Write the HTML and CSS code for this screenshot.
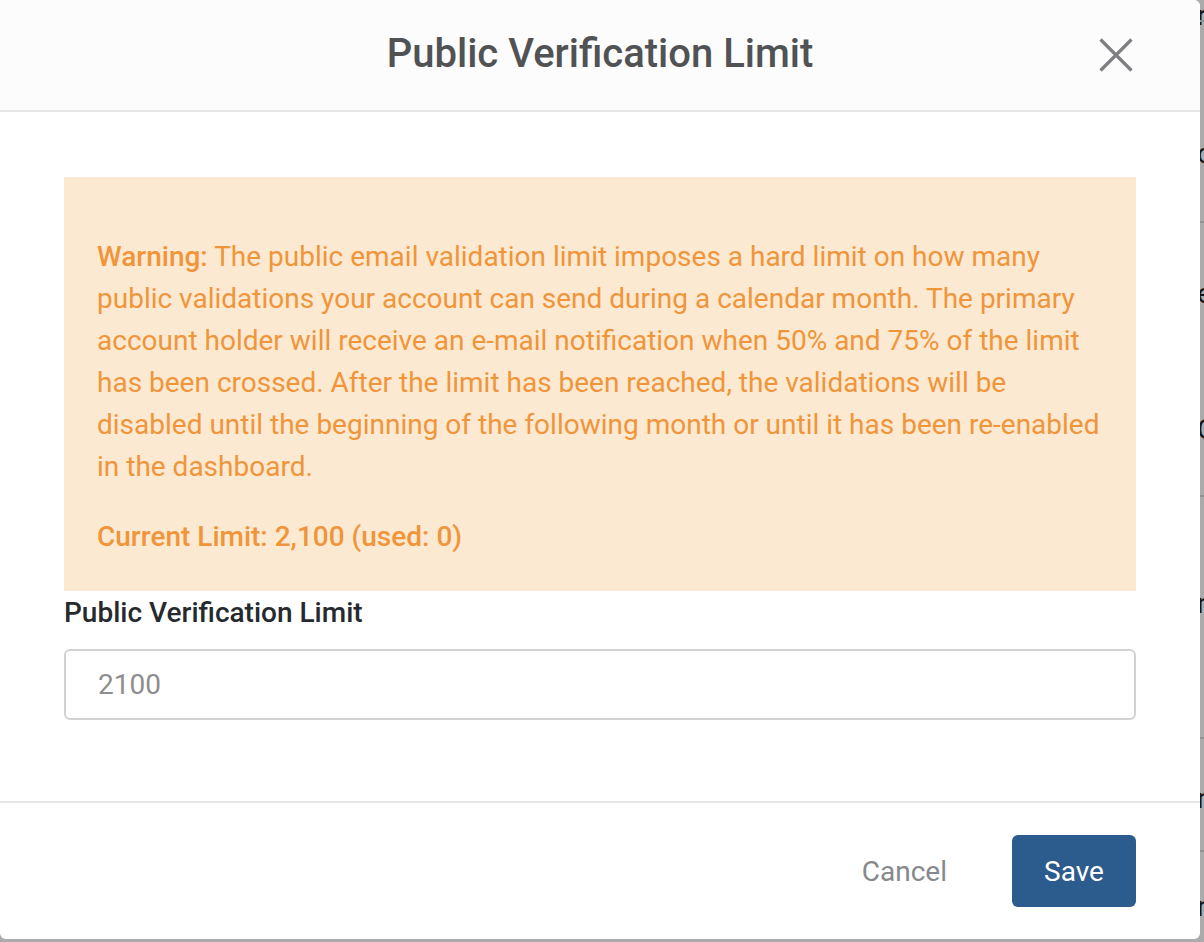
FILE: index.html
```html
<!DOCTYPE html>
<html lang="en">
<head>
<meta charset="utf-8">
<title>Public Verification Limit</title>
<link rel="stylesheet" href="styles.css">
</head>
<body>
<div class="page-behind" aria-hidden="true">
  <span class="frag" style="top:2px">r</span>
  <span class="rule" style="top:20px"></span>
  <span class="frag" style="top:140px">c</span>
  <span class="rule" style="top:221px"></span>
  <span class="frag" style="top:280px">e</span>
  <span class="frag" style="top:416px">C</span>
  <span class="rule" style="top:495px"></span>
  <span class="frag" style="top:590px">n</span>
  <span class="rule" style="top:737px"></span>
  <span class="frag" style="top:785px">n</span>
  <span class="rule" style="top:850px"></span>
  <span class="frag" style="top:893px">n</span>
</div>
<div class="backdrop"></div>
<div class="modal">
  <header class="modal-header">
    <h1 class="modal-title">Public Verification Limit</h1>
    <button class="close-btn" aria-label="Close">
      <svg width="34" height="34" viewBox="0 0 34 34"><path d="M1.5 1.5 L32.5 32.5 M32.5 1.5 L1.5 32.5" stroke="#7d7f82" stroke-width="3.2" fill="none"/></svg>
    </button>
  </header>
  <section class="modal-body">
    <div class="warning">
      <p class="warning-text"><strong>Warning:</strong> The public email validation limit imposes a hard limit on how many public validations your account can send during a calendar month. The primary account holder will receive an e-mail notification when 50% and 75% of the limit has been crossed. After the limit has been reached, the validations will be disabled until the beginning of the following month or until it has been re-enabled in the dashboard.</p>
      <p class="warning-current">Current Limit: 2,100 (used: 0)</p>
    </div>
    <label class="field-label" for="limit">Public Verification Limit</label>
    <input class="field-input" id="limit" type="text" placeholder="2100">
  </section>
  <footer class="modal-footer">
    <button class="btn-cancel">Cancel</button>
    <button class="btn-save">Save</button>
  </footer>
</div>
</body>
</html>
```
FILE: styles.css
```css
html, body {
  margin: 0;
  padding: 0;
}
body {
  width: 1204px;
  height: 942px;
  overflow: hidden;
  background: #ffffff;
  font-family: Roboto, "Liberation Sans", Arial, sans-serif;
  position: relative;
}
.page-behind {
  position: absolute;
  inset: 0;
}
.page-behind .frag {
  position: absolute;
  left: 1197px;
  font-size: 28px;
  line-height: 28px;
  color: #222;
}
.page-behind .rule {
  position: absolute;
  left: 1190px;
  width: 20px;
  height: 2px;
  background: #d8d8d8;
}
.backdrop {
  position: absolute;
  inset: 0;
  background: rgba(0, 0, 0, 0.33);
}
.modal {
  position: absolute;
  left: 0;
  top: 0;
  width: 1200px;
  height: 939px;
  background: #ffffff;
  border-radius: 0 6px 6px 6px;
  display: flex;
  flex-direction: column;
  overflow: hidden;
}
.modal-header {
  height: 110px;
  background: #fcfcfc;
  border-bottom: 2px solid #e6e6e6;
  display: flex;
  align-items: center;
  justify-content: center;
  position: relative;
}
.modal-title {
  margin: 0;
  font-size: 40px;
  font-weight: 500;
  color: #505254;
  line-height: 1;
  position: relative;
  top: -1px;
}
.close-btn {
  position: absolute;
  right: 67px;
  top: 38px;
  width: 34px;
  height: 34px;
  padding: 0;
  border: 0;
  background: transparent;
  display: block;
}
.close-btn svg {
  display: block;
}
.modal-body {
  padding: 65px 64px 81px;
  display: flex;
  flex-direction: column;
}
.warning {
  background: #fce9d2;
  padding: 59px 30px 33px 33px;
  color: #f0953a;
  font-size: 28px;
  line-height: 42px;
}
.warning p {
  margin: 0;
}
.warning-text strong {
  font-weight: 500;
}
.warning-text {
  margin-bottom: 28px !important;
}
.warning-current {
  font-weight: 500;
  font-size: 28px;
}
.field-label {
  margin-top: 4px;
  font-size: 28px;
  line-height: 36px;
  font-weight: 500;
  color: #262a2e;
}
.field-input {
  margin-top: 18px;
  height: 71px;
  box-sizing: border-box;
  border: 2px solid #d2d2d2;
  border-radius: 6px;
  padding: 0 32px;
  font-family: inherit;
  font-size: 28px;
  color: #555;
  outline: none;
}
.field-input::placeholder {
  color: #8e8e8e;
}
.modal-footer {
  border-top: 2px solid #e6e6e6;
  flex: 1;
  display: flex;
  justify-content: flex-end;
  align-items: flex-start;
  padding: 32px 64px 0;
  gap: 33px;
}
.btn-cancel {
  height: 72px;
  padding: 0 32px;
  border: 0;
  background: transparent;
  font-family: inherit;
  font-size: 28px;
  color: #86898c;
}
.btn-save {
  width: 124px;
  height: 72px;
  border: 0;
  border-radius: 6px;
  background: #2c5b8d;
  color: #ffffff;
  font-family: inherit;
  font-size: 28px;
}
```
